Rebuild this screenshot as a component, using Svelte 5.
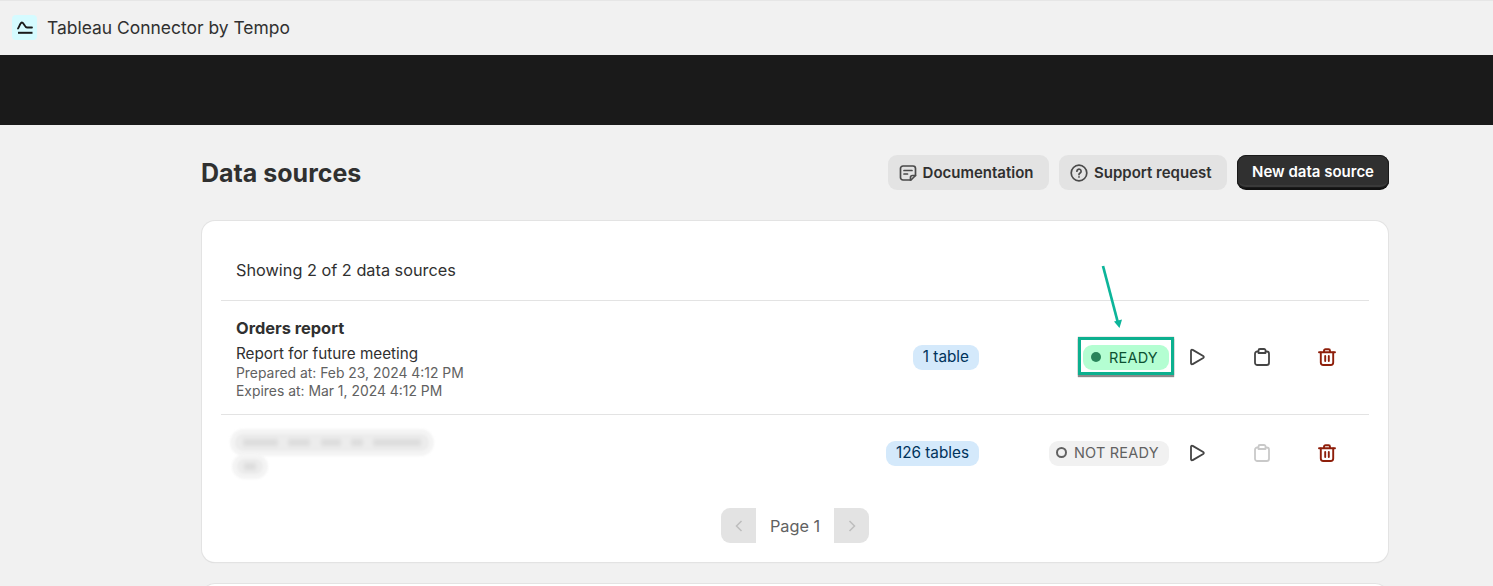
<script>
  const sources = [
    {
      name: 'Orders report',
      description: 'Report for future meeting',
      prepared: 'Feb 23, 2024 4:12 PM',
      expires: 'Mar 1, 2024 4:12 PM',
      tables: '1 table',
      ready: true
    },
    { blurred: true, tables: '126 tables', ready: false }
  ];

  // widths of the darker spots inside the redacted title
  const spots = [35, 22, 20, 12, 48];
</script>

<div class="page">
  <header class="topbar">
    <span class="logo">
      <svg width="16" height="13" viewBox="0 0 16 13" fill="none" stroke="#1a1a1a" stroke-width="1.800">
        <path d="M1 7.500 C2.500 5.500 3 1.500 5 1.500 C7 1.500 7.500 6.500 10 6.500 L15 6.500" stroke-linecap="round" />
        <path d="M1 11.800 H15.500" stroke-width="2" />
      </svg>
    </span>
    <span class="app-name">Tableau Connector by Tempo</span>
  </header>
  <div class="black-bar"></div>

  <main class="content">
    <div class="title-row">
      <h1>Data sources</h1>
      <div class="actions">
        <button class="btn">
          <svg width="18" height="18" viewBox="0 0 18 18" fill="none" stroke="#4a4a4a" stroke-width="1.700" stroke-linejoin="round" stroke-linecap="round">
            <path d="M1.500 4.500 a2.500 2.500 0 0 1 2.500-2.500 h10 a2.500 2.500 0 0 1 2.500 2.500 v7 l-4.500 4.500 h-8 a2.500 2.500 0 0 1-2.500-2.500 z" />
            <path d="M5 6.500 h8 M5 10 h3.500" />
            <path d="M11.500 16 v-2.500 a2 2 0 0 1 2-2 h3" />
          </svg>
          Documentation
        </button>
        <button class="btn">
          <svg width="18" height="18" viewBox="0 0 18 18" fill="none" stroke="#4a4a4a" stroke-width="1.700" stroke-linecap="round">
            <circle cx="9" cy="9" r="7.800" />
            <path d="M6.900 7.200 a2.100 2.100 0 1 1 3.200 1.800 c-.7 .45-1.100 .8-1.100 1.600" />
            <path d="M9 12.900 v.1" />
          </svg>
          Support request
        </button>
        <button class="btn primary">New data source</button>
      </div>
    </div>

    <section class="card">
      <div class="showing">Showing 2 of 2 data sources</div>
      {#each sources as src}
        <div class="row" class:blur-row={src.blurred}>
          <div class="info">
            {#if src.blurred}
              <div class="smudge wide">
                {#each spots as w}
                  <i class="spot" style="width: {w}px"></i>
                {/each}
              </div>
              <div class="smudge small"><i class="spot" style="width: 12px"></i></div>
            {:else}
              <div class="name">{src.name}</div>
              <div class="desc">{src.description}</div>
              <div class="meta">Prepared at: {src.prepared}</div>
              <div class="meta">Expires at: {src.expires}</div>
            {/if}
          </div>
          <div class="tables"><span class="table-pill">{src.tables}</span></div>
          <div class="status">
            {#if src.ready}
              <span class="highlight">
                <span class="badge ready"><i class="dot"></i>READY</span>
                <svg class="arrow" width="26" height="68" viewBox="0 0 26 68" fill="#0cb59a">
                  <path d="M5 4 L20 61" stroke="#0cb59a" stroke-width="2.700" fill="none" />
                  <path d="M16 59.500 L24 57.500 L21.500 66 Z" />
                </svg>
              </span>
            {:else}
              <span class="badge idle"><i class="ring"></i>NOT READY</span>
            {/if}
          </div>
          <div class="icons">
            <svg width="18" height="18" viewBox="0 0 18 18" fill="none" stroke="#444" stroke-width="1.800" stroke-linejoin="round">
              <path d="M3 2.800 C3 1.800 3.900 1.400 4.700 1.900 L15.200 8 C16 8.500 16 9.500 15.200 10 L4.700 16.100 C3.900 16.600 3 16.200 3 15.200 Z" />
            </svg>
            <svg width="18" height="18" viewBox="0 0 18 18" fill="none" stroke={src.ready ? '#444' : '#c9c9c9'} stroke-width="1.800" stroke-linejoin="round">
              <path d="M5.500 3.500 H4.300 A2.300 2.300 0 0 0 2 5.800 V14.700 A2.300 2.300 0 0 0 4.300 17 H13.700 A2.300 2.300 0 0 0 16 14.700 V5.800 A2.300 2.300 0 0 0 13.700 3.500 H12.500" />
              <path d="M5.500 2.500 A1.500 1.500 0 0 1 7 1 H11 A1.500 1.500 0 0 1 12.500 2.500 V5 H5.500 Z" />
            </svg>
            <svg width="18" height="18" viewBox="0 0 18 18" fill="none" stroke="#8e1f0b" stroke-width="1.900" stroke-linecap="round" stroke-linejoin="round">
              <path d="M1 4.300 H17" />
              <path d="M6 4 V2.800 A1.500 1.500 0 0 1 7.500 1.300 H10.500 A1.500 1.500 0 0 1 12 2.800 V4" />
              <path d="M2.800 4.500 V14.500 A2.500 2.500 0 0 0 5.300 17 H12.700 A2.500 2.500 0 0 0 15.200 14.500 V4.500" />
              <path d="M7.200 8 V13 M10.800 8 V13" />
            </svg>
          </div>
        </div>
      {/each}
      <nav class="pager">
        <span class="page-btn prev">
          <svg width="8" height="12" viewBox="0 0 8 12" fill="none" stroke="#bdbdbd" stroke-width="1.500"><path d="M6.500 1 L1.500 6 L6.500 11" /></svg>
        </span>
        <span class="page-label">Page 1</span>
        <span class="page-btn next">
          <svg width="8" height="12" viewBox="0 0 8 12" fill="none" stroke="#bdbdbd" stroke-width="1.500"><path d="M1.500 1 L6.500 6 L1.500 11" /></svg>
        </span>
      </nav>
    </section>
    <div class="card next-card"></div>
  </main>
</div>

<style>
  :global(body) {
    background: #f1f1f1;
    font-family: Inter, "Noto Sans", sans-serif;
    color: #303030;
    overflow: hidden;
  }

  .page {
    height: 586px;
    overflow: hidden;
  }

  .topbar {
    height: 53px;
    padding: 0 0 1px 12px;
    border-top: 1px solid #e6e6e6;
    display: flex;
    align-items: center;
    gap: 10px;
  }

  .logo {
    width: 25px;
    height: 25px;
    border-radius: 4px;
    background: #d5fbff;
    display: flex;
    align-items: center;
    justify-content: center;
  }

  .app-name {
    font-size: 17.450px;
    color: #303030;
  }

  .black-bar {
    height: 70px;
    background: #1a1a1a;
  }

  .content {
    padding: 30px 105px 0 202px;
  }

  .title-row {
    display: flex;
    justify-content: space-between;
    align-items: center;
    height: 35px;
    margin: 0 -1px 31px;
  }

  h1 {
    margin: 0;
    padding-top: 1px;
    font-size: 25px;
    font-weight: 700;
    color: #303030;
  }

  .actions {
    display: flex;
    gap: 10px;
  }

  .btn {
    height: 35px;
    padding: 0 15.500px 0 11px;
    border: none;
    border-radius: 9px;
    background: #e3e3e3;
    color: #303030;
    font: 600 15px Inter, sans-serif;
    display: flex;
    align-items: center;
    gap: 6px;
  }

  .btn.primary {
    padding: 0 15px;
    background: #303030;
    color: #fff;
    border-bottom: 2px solid #111;
    box-shadow: inset 0 0 0 1px #1a1a1a, inset 0 -3px 0 #3a3a3a;
  }

  .card {
    background: #fff;
    border-radius: 13px;
    box-shadow: 0 0 0 1px #e3e3e3, 0 1px 1px #cfcfcf;
    padding: 0 19px;
  }

  .showing {
    height: 79px;
    padding: 18px 0 0 15px;
    box-sizing: border-box;
    display: flex;
    align-items: center;
    font-size: 16.300px;
    color: #303030;
  }

  .row {
    display: flex;
    align-items: center;
    border-top: 1px solid #e3e3e3;
    height: 113px;
    padding-left: 15px;
  }

  .row.blur-row {
    height: 76px;
    align-items: flex-start;
  }

  .blur-row .tables,
  .blur-row .status,
  .blur-row .icons {
    align-self: center;
  }

  .blur-row .info {
    padding-top: 14px;
    margin-left: -6px;
  }

  .info {
    flex: 1;
    padding-top: 4px;
  }

  .name {
    font-size: 16.400px;
    font-weight: 650;
    margin-bottom: 7px;
    line-height: 19px;
  }

  .desc {
    font-size: 15.250px;
    line-height: 18px;
    margin-bottom: 1px;
  }

  .meta {
    font-size: 13.900px;
    line-height: 18px;
    color: #616161;
  }

  .smudge {
    background: #ececec;
    box-shadow: 0 0 0 5px #f4f4f4;
    border-radius: 12px;
    box-sizing: border-box;
    display: flex;
    align-items: center;
    justify-content: space-between;
    filter: blur(1px);
  }

  .smudge.wide {
    width: 194px;
    height: 17px;
    margin: 5px 0 0 5px;
    padding: 0 8px;
  }

  .smudge.small {
    width: 26px;
    height: 15px;
    margin: 8px 0 0 7px;
    justify-content: center;
  }

  .spot {
    height: 7px;
    border-radius: 3px;
    background: #dddddd;
    filter: blur(1.500px);
  }

  .tables {
    display: flex;
    justify-content: flex-end;
    padding-right: 70px;
  }

  .table-pill {
    background: #d4e9fb;
    color: #00335c;
    border-radius: 9px;
    padding: 0 10px;
    height: 25px;
    line-height: 24px;
    font-size: 15.300px;
    white-space: nowrap;
  }

  .status {
    width: 120px;
    display: flex;
    justify-content: flex-end;
  }

  .highlight {
    position: relative;
    border: 3px solid #0cb08f;
    box-shadow: 0 2px 1px #8a8a8a, 0 0 1px #8a8a8a;
    padding: 5px 2px 2px;
    margin: -8px -5px -5px 0;
    background: #fff;
    display: flex;
  }

  .arrow {
    position: absolute;
    left: 17px;
    top: -78px;
  }

  .badge {
    height: 25px;
    padding-bottom: 1px;
    border-radius: 9px;
    display: inline-flex;
    align-items: center;
    font-size: 14.500px;
    letter-spacing: 0.2px;
    white-space: nowrap;
    box-sizing: border-box;
  }

  .badge.ready {
    width: 86px;
    background: #b4fed2;
    color: #0c5132;
    padding-left: 8px;
    gap: 8px;
  }

  .badge.idle {
    width: 121px;
    background: #f1f1f1;
    color: #616161;
    padding-left: 7px;
    gap: 7px;
  }

  .dot {
    width: 10px;
    height: 10px;
    border-radius: 50%;
    background: #29845a;
  }

  .ring {
    width: 11px;
    height: 11px;
    border-radius: 50%;
    box-sizing: border-box;
    border: 2px solid #616161;
  }

  .icons {
    display: flex;
    gap: 47px;
    margin: 0 0 1px 19px;
    width: 181px;
  }

  .pager {
    display: flex;
    justify-content: center;
    align-items: center;
    height: 35px;
    padding: 17px 0 19px;
  }

  .page-btn {
    width: 35px;
    height: 35px;
    background: #e3e3e3;
    display: flex;
    align-items: center;
    justify-content: center;
  }

  .page-btn.prev {
    border-radius: 9px 0 0 9px;
  }

  .page-btn.next {
    border-radius: 0 9px 9px 0;
  }

  .page-label {
    width: 78px;
    text-align: center;
    font-size: 16.300px;
    color: #616161;
  }

  .next-card {
    margin-top: 22px;
    height: 40px;
  }
</style>
